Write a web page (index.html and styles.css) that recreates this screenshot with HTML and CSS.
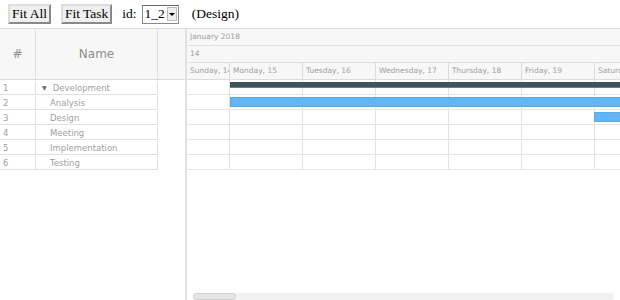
FILE: index.html
```html
<!DOCTYPE html>
<html lang="en">
  <head>
    <meta charset="UTF-8" />
    <title>Gantt</title>
    <link rel="stylesheet" href="styles.css">
  </head>
  <body>
    <div class="toolbar">
      <button class="btn">Fit All</button>
      <button class="btn">Fit Task</button>
      <label class="lbl">id:</label>
      <span class="sel">1_2<span class="arrow"></span></span>
      <span class="name">(Design)</span>
    </div>

    <div class="gantt">
      <!-- left grid -->
      <div class="grid">
        <div class="grid-head">
          <div class="hc num">#</div>
          <div class="hc title">Name</div>
          <div class="hc rest"></div>
        </div>
        <div class="grid-body">
          <div class="row"><div class="c num">1</div><div class="c title"><span class="tri">&#9660;</span>Development</div></div>
          <div class="row"><div class="c num">2</div><div class="c title sub">Analysis</div></div>
          <div class="row"><div class="c num">3</div><div class="c title sub">Design</div></div>
          <div class="row"><div class="c num">4</div><div class="c title sub">Meeting</div></div>
          <div class="row"><div class="c num">5</div><div class="c title sub">Implementation</div></div>
          <div class="row"><div class="c num">6</div><div class="c title sub">Testing</div></div>
        </div>
      </div>

      <!-- timeline -->
      <div class="timeline">
        <div class="tl-head">
          <div class="tl-line">January 2018</div>
          <div class="tl-line">14</div>
          <div class="days">
            <div class="day first">Sunday, 14</div>
            <div class="day">Monday, 15</div>
            <div class="day">Tuesday, 16</div>
            <div class="day">Wednesday, 17</div>
            <div class="day">Thursday, 18</div>
            <div class="day">Friday, 19</div>
            <div class="day">Saturday, 20</div>
          </div>
        </div>
        <div class="tl-body">
          <div class="tl-row"><i class="first"></i><i></i><i></i><i></i><i></i><i></i><i></i><div class="bar summary"></div></div>
          <div class="tl-row"><i class="first"></i><i></i><i></i><i></i><i></i><i></i><i></i><div class="bar task analysis"></div></div>
          <div class="tl-row"><i class="first"></i><i></i><i></i><i></i><i></i><i></i><i></i><div class="bar task design"></div></div>
          <div class="tl-row"><i class="first"></i><i></i><i></i><i></i><i></i><i></i><i></i></div>
          <div class="tl-row"><i class="first"></i><i></i><i></i><i></i><i></i><i></i><i></i></div>
          <div class="tl-row"><i class="first"></i><i></i><i></i><i></i><i></i><i></i><i></i></div>
        </div>
        <div class="scroll"><div class="thumb"></div></div>
      </div>
    </div>
  </body>
</html>
```

FILE: styles.css
```css
body {
  margin: 0;
  font-family: "Liberation Serif", serif;
  background: #fff;
  overflow: hidden;
}
.toolbar {
  height: 28px;
  display: flex;
  align-items: center;
  padding-left: 8px;
  font-size: 13.5px;
  color: #000;
}
.btn {
  font-family: "Liberation Serif", serif;
  font-size: 13.5px;
  padding: 0 2px;
  height: 20px;
  line-height: 16px;
  background: #efefef;
  border: 2px outset #ddd;
  border-radius: 0;
  margin-right: 10px;
  color: #000;
}
.lbl {
  margin-right: 5px;
}
.sel {
  display: inline-flex;
  align-items: center;
  height: 17px;
  padding: 0 1px 0 2px;
  border: 1px solid #888;
  border-top-color: #666;
  font-size: 13.5px;
  margin-right: 13px;
}
.arrow {
  display: inline-block;
  width: 8px;
  height: 12px;
  margin-left: 2px;
  background: #eee;
  border: 1px solid #bbb;
  position: relative;
}
.arrow::after {
  content: "";
  position: absolute;
  left: 1px;
  top: 5px;
  border-left: 3px solid transparent;
  border-right: 3px solid transparent;
  border-top: 3px solid #000;
}

.gantt {
  display: flex;
  height: 272px;
  border-top: 1px solid #dcdcdc;
  font-family: "DejaVu Sans", sans-serif;
  color: #a0a0a0;
}
.grid {
  width: 185px;
  flex: none;
}
.grid-head {
  display: flex;
  height: 50px;
  background: #f7f7f7;
  border-bottom: 1px solid #dcdcdc;
}
.hc {
  display: flex;
  align-items: center;
  justify-content: center;
  font-size: 12px;
  color: #8d8d8d;
}
.num {
  width: 36px;
  border-right: 1px solid #e0e0e0;
  box-sizing: border-box;
}
.title {
  width: 122px;
  border-right: 1px solid #e0e0e0;
  box-sizing: border-box;
}
.rest {
  flex: 1;
}
.grid-body {
  width: 158px;
}
.row {
  display: flex;
  height: 15px;
  padding-top: 1px;
  border-bottom: 1px solid #e0e0e0;
  box-sizing: border-box;
  font-size: 8.5px;
}
.c {
  display: flex;
  align-items: center;
}
.c.num {
  padding-left: 3px;
}
.c.title {
  padding-left: 6px;
}
.c.sub {
  padding-left: 14px;
}
.tri {
  font-size: 6px;
  margin-right: 6px;
  color: #666;
}

.timeline {
  flex: 1;
  overflow: hidden;
  border-left: 2px solid #e2e2e2;
  position: relative;
}
.tl-head {
  background: #f7f7f7;
  border-bottom: 1px solid #dcdcdc;
  font-size: 7.5px;
  color: #a0a0a0;
}
.tl-line {
  height: 16px;
  line-height: 16px;
  padding-left: 3px;
  border-bottom: 1px solid #e0e0e0;
}
.days {
  display: flex;
  height: 16px;
  line-height: 16px;
}
.day {
  width: 73px;
  flex: none;
  padding-left: 3px;
  box-sizing: border-box;
  border-right: 1px solid #dcdcdc;
  white-space: nowrap;
  overflow: hidden;
}
.day.first {
  width: 43px;
}
.tl-row {
  display: flex;
  height: 15px;
  border-bottom: 1px solid #e6e6e6;
  box-sizing: border-box;
  position: relative;
}
.tl-row i {
  width: 73px;
  flex: none;
  border-right: 1px solid #e2e2e2;
  box-sizing: border-box;
}
.tl-row i.first {
  width: 43px;
}
.bar {
  position: absolute;
}
.summary {
  left: 43px;
  right: -20px;
  top: 2px;
  height: 5px;
  background: #3f525c;
  border-bottom: 1px solid #6b7d86;
}
.task {
  top: 2px;
  height: 10px;
  background: #64b5f6;
  border: 1px solid #5aa8e6;
  box-sizing: border-box;
}
.analysis {
  left: 43px;
  right: -20px;
}
.design {
  left: 407px;
  right: -20px;
}
.scroll {
  position: absolute;
  left: 6px;
  right: 6px;
  bottom: 1px;
  height: 7px;
  background: #f2f2f2;
  border-radius: 4px;
}
.thumb {
  width: 43px;
  height: 7px;
  background: #e6e6e6;
  border: 1px solid #cfcfcf;
  box-sizing: border-box;
  border-radius: 4px;
}
```
